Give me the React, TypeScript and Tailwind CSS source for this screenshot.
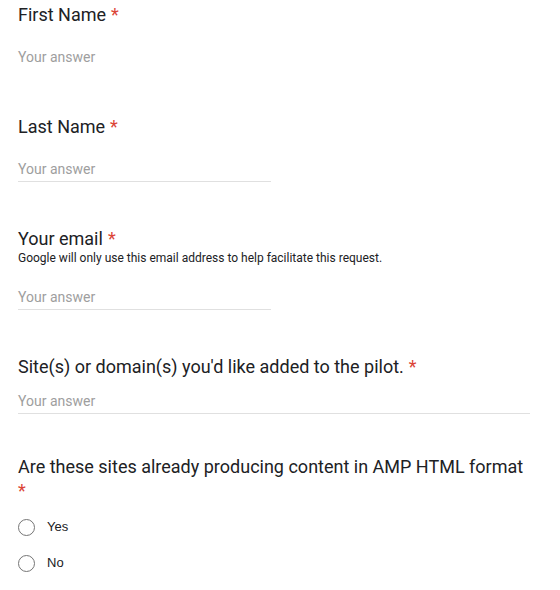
import React from "react";

const font = { fontFamily: "Roboto, 'Noto Sans', Arial, sans-serif" };

function Req() {
  return <span className="text-[#db4437] ml-[5px]">*</span>;
}

function Answer({ line = true, wide = false, mt }: { line?: boolean; wide?: boolean; mt: string }) {
  return (
    <div
      className={`${mt} h-[23px] ${wide ? "w-[512px]" : "w-[253px]"} border-b ${
        line ? "border-[#e0e0e0]" : "border-transparent"
      } text-[14px] leading-[21px] text-[#9e9e9e]`}
    >
      Your answer
    </div>
  );
}

function Radio({ label }: { label: string }) {
  return (
    <div className="flex items-center h-[20px]">
      <div className="w-[17px] h-[17px] rounded-full border-[1.5px] border-[#757575]" />
      <span className="ml-[12px] text-[13px] text-[#202124]" style={{ fontFamily: "Arial, 'Liberation Sans', sans-serif" }}>
        {label}
      </span>
    </div>
  );
}

export default function App() {
  return (
    <div className="bg-white w-[560px] h-[590px] pl-[18px] pt-[3px] text-[#202124]" style={font}>
      <div className="text-[18px] leading-[24px]">
        First Name
        <Req />
      </div>
      <Answer line={false} mt="mt-[20px]" />

      <div className="mt-[45px] text-[18px] leading-[24px]">
        Last Name
        <Req />
      </div>
      <Answer mt="mt-[20px]" />

      <div className="mt-[45px] text-[18px] leading-[24px]">
        Your email
        <Req />
      </div>
      <div className="text-[12px] leading-[14px] text-[#202124]">
        Google will only use this email address to help facilitate this request.
      </div>
      <Answer mt="mt-[22px]" />

      <div className="mt-[45px] text-[18px] leading-[24px]">
        Site(s) or domain(s) you'd like added to the pilot.
        <Req />
      </div>
      <Answer wide mt="mt-[12px]" />

      <div className="mt-[41px] text-[18px] leading-[24px] w-[520px]">
        Are these sites already producing content in AMP HTML format
        <div className="text-[#db4437]">*</div>
      </div>
      <div className="mt-[14px] flex flex-col gap-[16px]">
        <Radio label="Yes" />
        <Radio label="No" />
      </div>
    </div>
  );
}
